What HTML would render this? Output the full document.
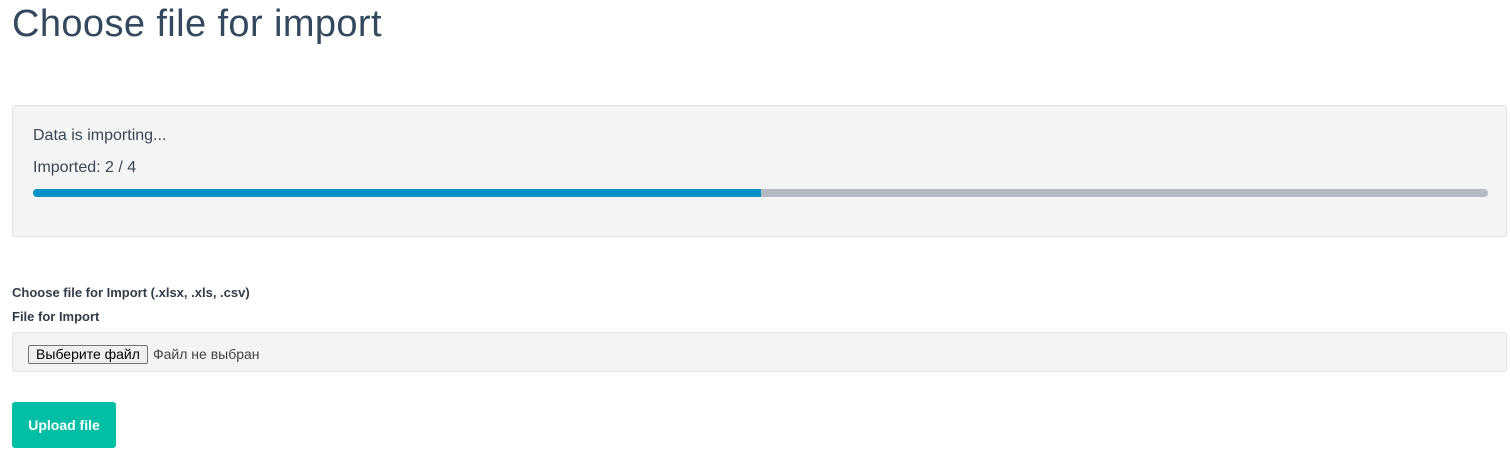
<!DOCTYPE html>
<html><head><meta charset="utf-8"><style>
body{margin:0;background:#fff;font-family:"Liberation Sans",sans-serif;color:#34495e;}
h1{position:absolute;left:12px;top:1px;margin:0;font-weight:400;font-size:38px;line-height:46px;color:#34495e;letter-spacing:0.4px}
.box{position:absolute;left:12px;top:105px;width:1493px;height:130px;background:#f4f4f4;border:1px solid #e3e3e3;border-radius:3px}
.t{position:absolute;left:20px;font-size:16px;color:#3b4654}
.bar{position:absolute;left:20px;top:83px;width:1455px;height:8px;background:#b5b9c3;border-radius:4px;overflow:hidden}
.fill{width:728px;height:8px;background:#0094c6}
.lbl{position:absolute;left:12px;font-size:13px;font-weight:bold;color:#333c4a}
.inp{position:absolute;left:12px;top:332px;width:1493px;height:38px;background:#f4f4f4;border:1px solid #e3e3e3;border-radius:3px}
.fb{position:absolute;left:15px;top:12px;width:120px;height:19px;box-sizing:border-box;border:1px solid #767676;border-radius:2px;background:#efefef;font-size:14px;color:#000;text-align:center;line-height:17px}
.fn{position:absolute;left:140px;top:12px;font-size:14px;color:#444;line-height:19px}
.up{position:absolute;left:12px;top:402px;width:104px;height:46px;background:#00bfa5;border-radius:3px;color:#fff;font-size:14px;font-weight:bold;text-align:center;line-height:46px}
</style></head><body>
<h1>Choose file for import</h1>
<div class="box">
<div class="t" style="top:21px">Data is importing...</div>
<div class="t" style="top:53px">Imported: 2 / 4</div>
<div class="bar"><div class="fill"></div></div>
</div>
<div class="lbl" style="top:285px">Choose file for Import (.xlsx, .xls, .csv)</div>
<div class="lbl" style="top:309px">File for Import</div>
<div class="inp"><div class="fb">Выберите файл</div><div class="fn">Файл не выбран</div></div>
<div class="up">Upload file</div>
</body></html>
